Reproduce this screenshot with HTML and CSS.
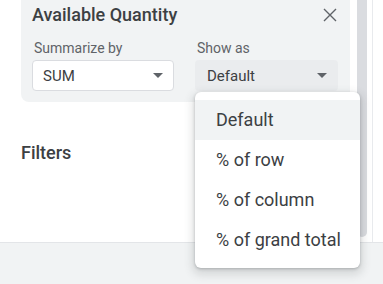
FILE: index.html
```html
<!DOCTYPE html>
<html>
<head>
<meta charset="utf-8">
<link rel="stylesheet" href="styles.css">
</head>
<body>
<div class="main">
  <div class="content">
    <div class="card">
      <div class="card-head">
        <div class="title">Available Quantity</div>
        <svg class="close" width="14" height="14" viewBox="0 0 14 14"><path d="M1 1L13 13M13 1L1 13" stroke="#5f6368" stroke-width="1.4" fill="none"/></svg>
      </div>
      <div class="fields">
        <div class="field">
          <div class="label">Summarize by</div>
          <div class="select bordered">
            <span>SUM</span>
            <svg class="arrow" width="10" height="5" viewBox="0 0 10 5"><path d="M0 0H10L5 5Z" fill="#5f6368"/></svg>
          </div>
        </div>
        <div class="field">
          <div class="label">Show as</div>
          <div class="select open">
            <span>Default</span>
            <svg class="arrow" width="10" height="5" viewBox="0 0 10 5"><path d="M0 0H10L5 5Z" fill="#5f6368"/></svg>
            <div class="menu">
              <div class="item active">Default</div>
              <div class="item">% of row</div>
              <div class="item">% of column</div>
              <div class="item">% of grand total</div>
            </div>
          </div>
        </div>
      </div>
    </div>
    <div class="section">Filters</div>
  </div>
  <div class="track"><div class="thumb"></div></div>
  <div class="vline"></div>
  <div class="rest"></div>
</div>
<div class="footer"></div>
</body>
</html>
```
FILE: styles.css
```css
html, body {
  margin: 0;
  padding: 0;
}
body {
  width: 383px;
  height: 284px;
  overflow: hidden;
  background: #ffffff;
  font-family: Roboto, "Liberation Sans", Arial, sans-serif;
  color: #3c4043;
}
.main {
  display: flex;
  height: 242px;
  border-bottom: 1px solid #e3e5e8;
}
.content {
  width: 329px;
  padding: 0 7px 0 21px;
}
.card {
  background: #f1f3f4;
  border-radius: 0 0 8px 8px;
  padding: 3px 12px 11px 11px;
}
.card-head {
  display: flex;
  align-items: center;
  justify-content: space-between;
  height: 24px;
}
.title {
  font-size: 18px;
  line-height: 24px;
  font-weight: 500;
  color: #3c4043;
}
.close {
  margin-right: 1px;
  margin-top: -1px;
}
.fields {
  display: flex;
  gap: 21px;
  margin-top: 11px;
}
.field {
  display: flex;
  flex-direction: column;
  gap: 2px;
}
.label {
  font-size: 14px;
  line-height: 20px;
  color: #5f6368;
  padding-left: 2px;
}
.select {
  position: relative;
  box-sizing: border-box;
  width: 143px;
  height: 31px;
  display: flex;
  align-items: center;
  justify-content: space-between;
  padding: 0 11px 0 12px;
  font-size: 15px;
  color: #3c4043;
  border-radius: 4px;
}
.select.bordered {
  width: 142px;
  background: #ffffff;
  border: 1px solid #dadce0;
  padding-left: 10px;
  padding-right: 10px;
}
.select.open {
  background: #eaecee;
}
.arrow {
  display: block;
}
.menu {
  position: absolute;
  left: 0;
  top: 32px;
  width: 165px;
  padding: 8px 0;
  background: #ffffff;
  border-radius: 6px;
  box-shadow: 0 1px 3px rgba(60,64,67,0.3), 0 4px 8px 3px rgba(60,64,67,0.15);
  z-index: 5;
}
.item {
  height: 40px;
  line-height: 40px;
  padding-left: 21px;
  font-size: 18px;
  color: #3c4043;
}
.item.active {
  background: #f1f3f4;
}
.section {
  margin-top: 39px;
  font-size: 18px;
  line-height: 24px;
  font-weight: 500;
  color: #3c4043;
}
.track {
  width: 10px;
}
.thumb {
  height: 237px;
  background: #dadce0;
  border-radius: 0 0 5px 5px;
}
.vline {
  width: 1px;
  margin-left: 5px;
  background: #e8eaed;
}
.rest {
  flex: 1;
}
.footer {
  height: 41px;
  background: #f1f3f4;
}
```
